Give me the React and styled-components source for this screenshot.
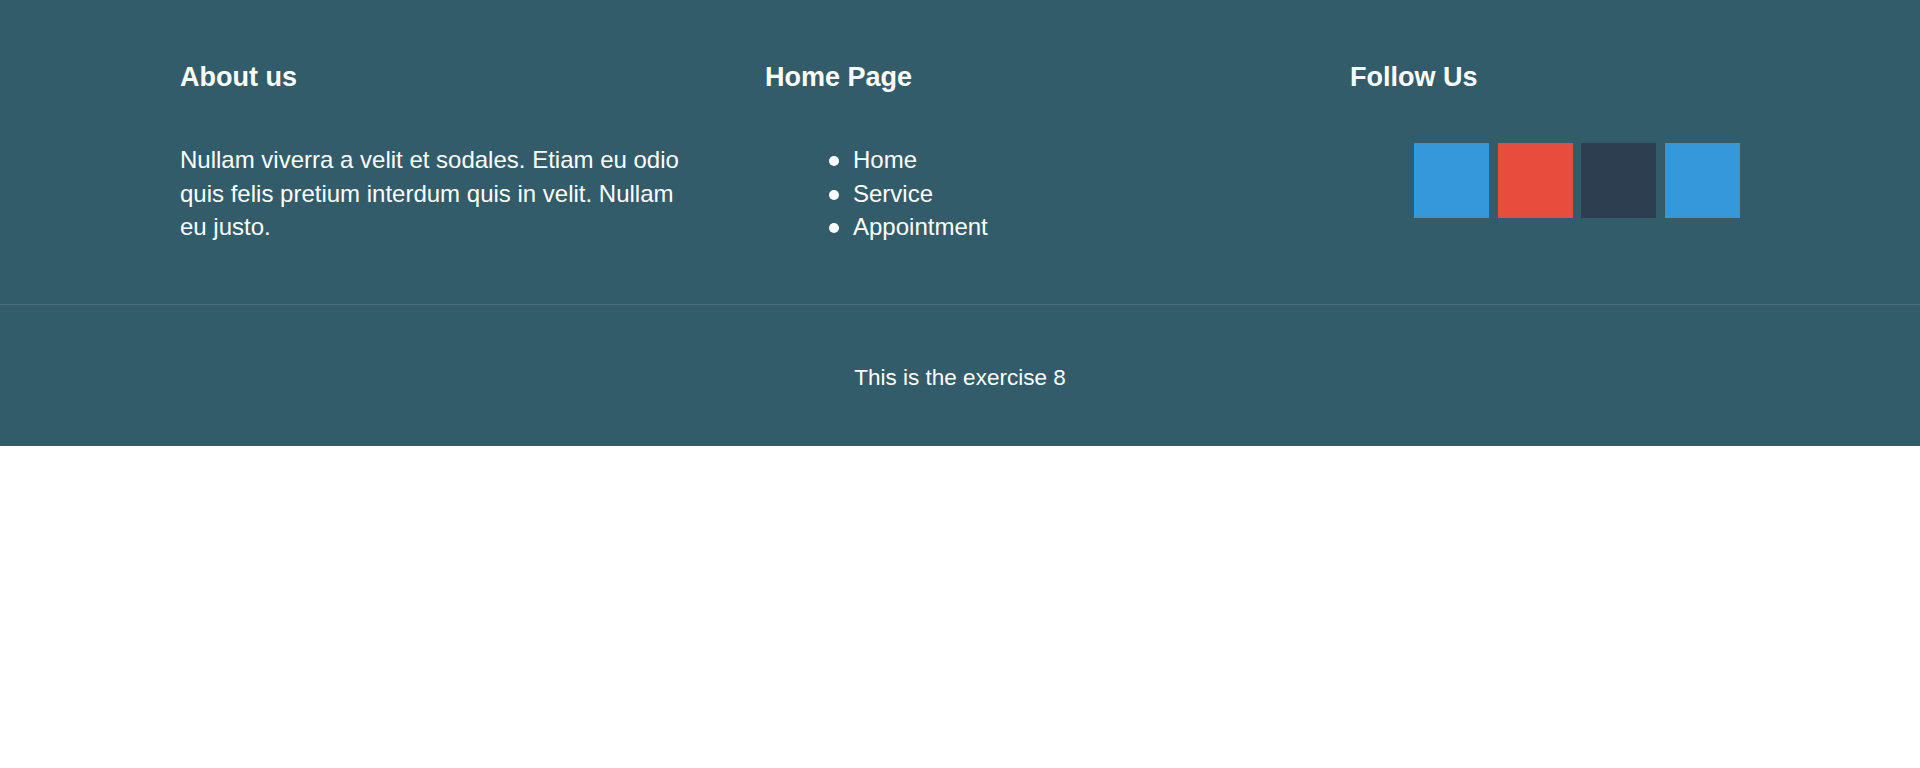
import React from "react";
import styled, { createGlobalStyle } from "styled-components";

const GlobalStyle = createGlobalStyle`
  * {
    box-sizing: border-box;
  }
  body {
    margin: 0;
    background: #ffffff;
    font-family: "Liberation Sans", Arial, sans-serif;
  }
`;

/** Footer wrapper rendering <footer> tag */
const Footer = styled.footer`
  width: 100%;
  background: #335c6b;
  color: #ffffff;
`;

/** Top part of the footer, three columns */
const FooterTop = styled.div`
  display: grid;
  grid-template-columns: 585px 585px 1fr;
  padding: 62px 0 60.5px 180px;
  border-bottom: 1px solid #4a6f7d;
`;

const Column = styled.div`
  display: flex;
  flex-direction: column;
`;

const Heading = styled.h3`
  margin: 0 0 50px;
  font-size: 27px;
  line-height: 31px;
  font-weight: 700;
`;

const Text = styled.p`
  margin: 0;
  width: 512px;
  font-size: 24px;
  line-height: 33.5px;
`;

const LinkList = styled.ul`
  margin: 0;
  padding: 0 0 0 64px;
  list-style: none;
`;

const LinkItem = styled.li`
  display: flex;
  align-items: center;
  gap: 14px;
  font-size: 24px;
  line-height: 33.5px;

  &::before {
    content: "";
    width: 10px;
    height: 10px;
    margin-top: 3px;
    border-radius: 50%;
    background: #ffffff;
  }
`;

const Socials = styled.div`
  display: flex;
  gap: 8.5px;
  padding-left: 64px;
`;

const SocialBox = styled.a`
  display: block;
  width: 75px;
  height: 75px;
  background: ${({ color }) => color};
`;

/** Bottom copyright row */
const FooterBottom = styled.div`
  padding: 60px 0 55px;
  text-align: center;
  font-size: 22.5px;
  line-height: 26px;
`;

const links = ["Home", "Service", "Appointment"];
const socials = ["#3598db", "#e84c3d", "#2c3e50", "#3598db"];

export default function App() {
  return (
    <>
      <GlobalStyle />
      <Footer>
        <FooterTop>
          <Column>
            <Heading>About us</Heading>
            <Text>
              Nullam viverra a velit et sodales. Etiam eu odio quis felis
              pretium interdum quis in velit. Nullam eu justo.
            </Text>
          </Column>
          <Column>
            <Heading>Home Page</Heading>
            <LinkList>
              {links.map((l) => (
                <LinkItem key={l}>{l}</LinkItem>
              ))}
            </LinkList>
          </Column>
          <Column>
            <Heading>Follow Us</Heading>
            <Socials>
              {socials.map((c, i) => (
                <SocialBox key={i} color={c} />
              ))}
            </Socials>
          </Column>
        </FooterTop>
        <FooterBottom>This is the exercise 8</FooterBottom>
      </Footer>
    </>
  );
}
